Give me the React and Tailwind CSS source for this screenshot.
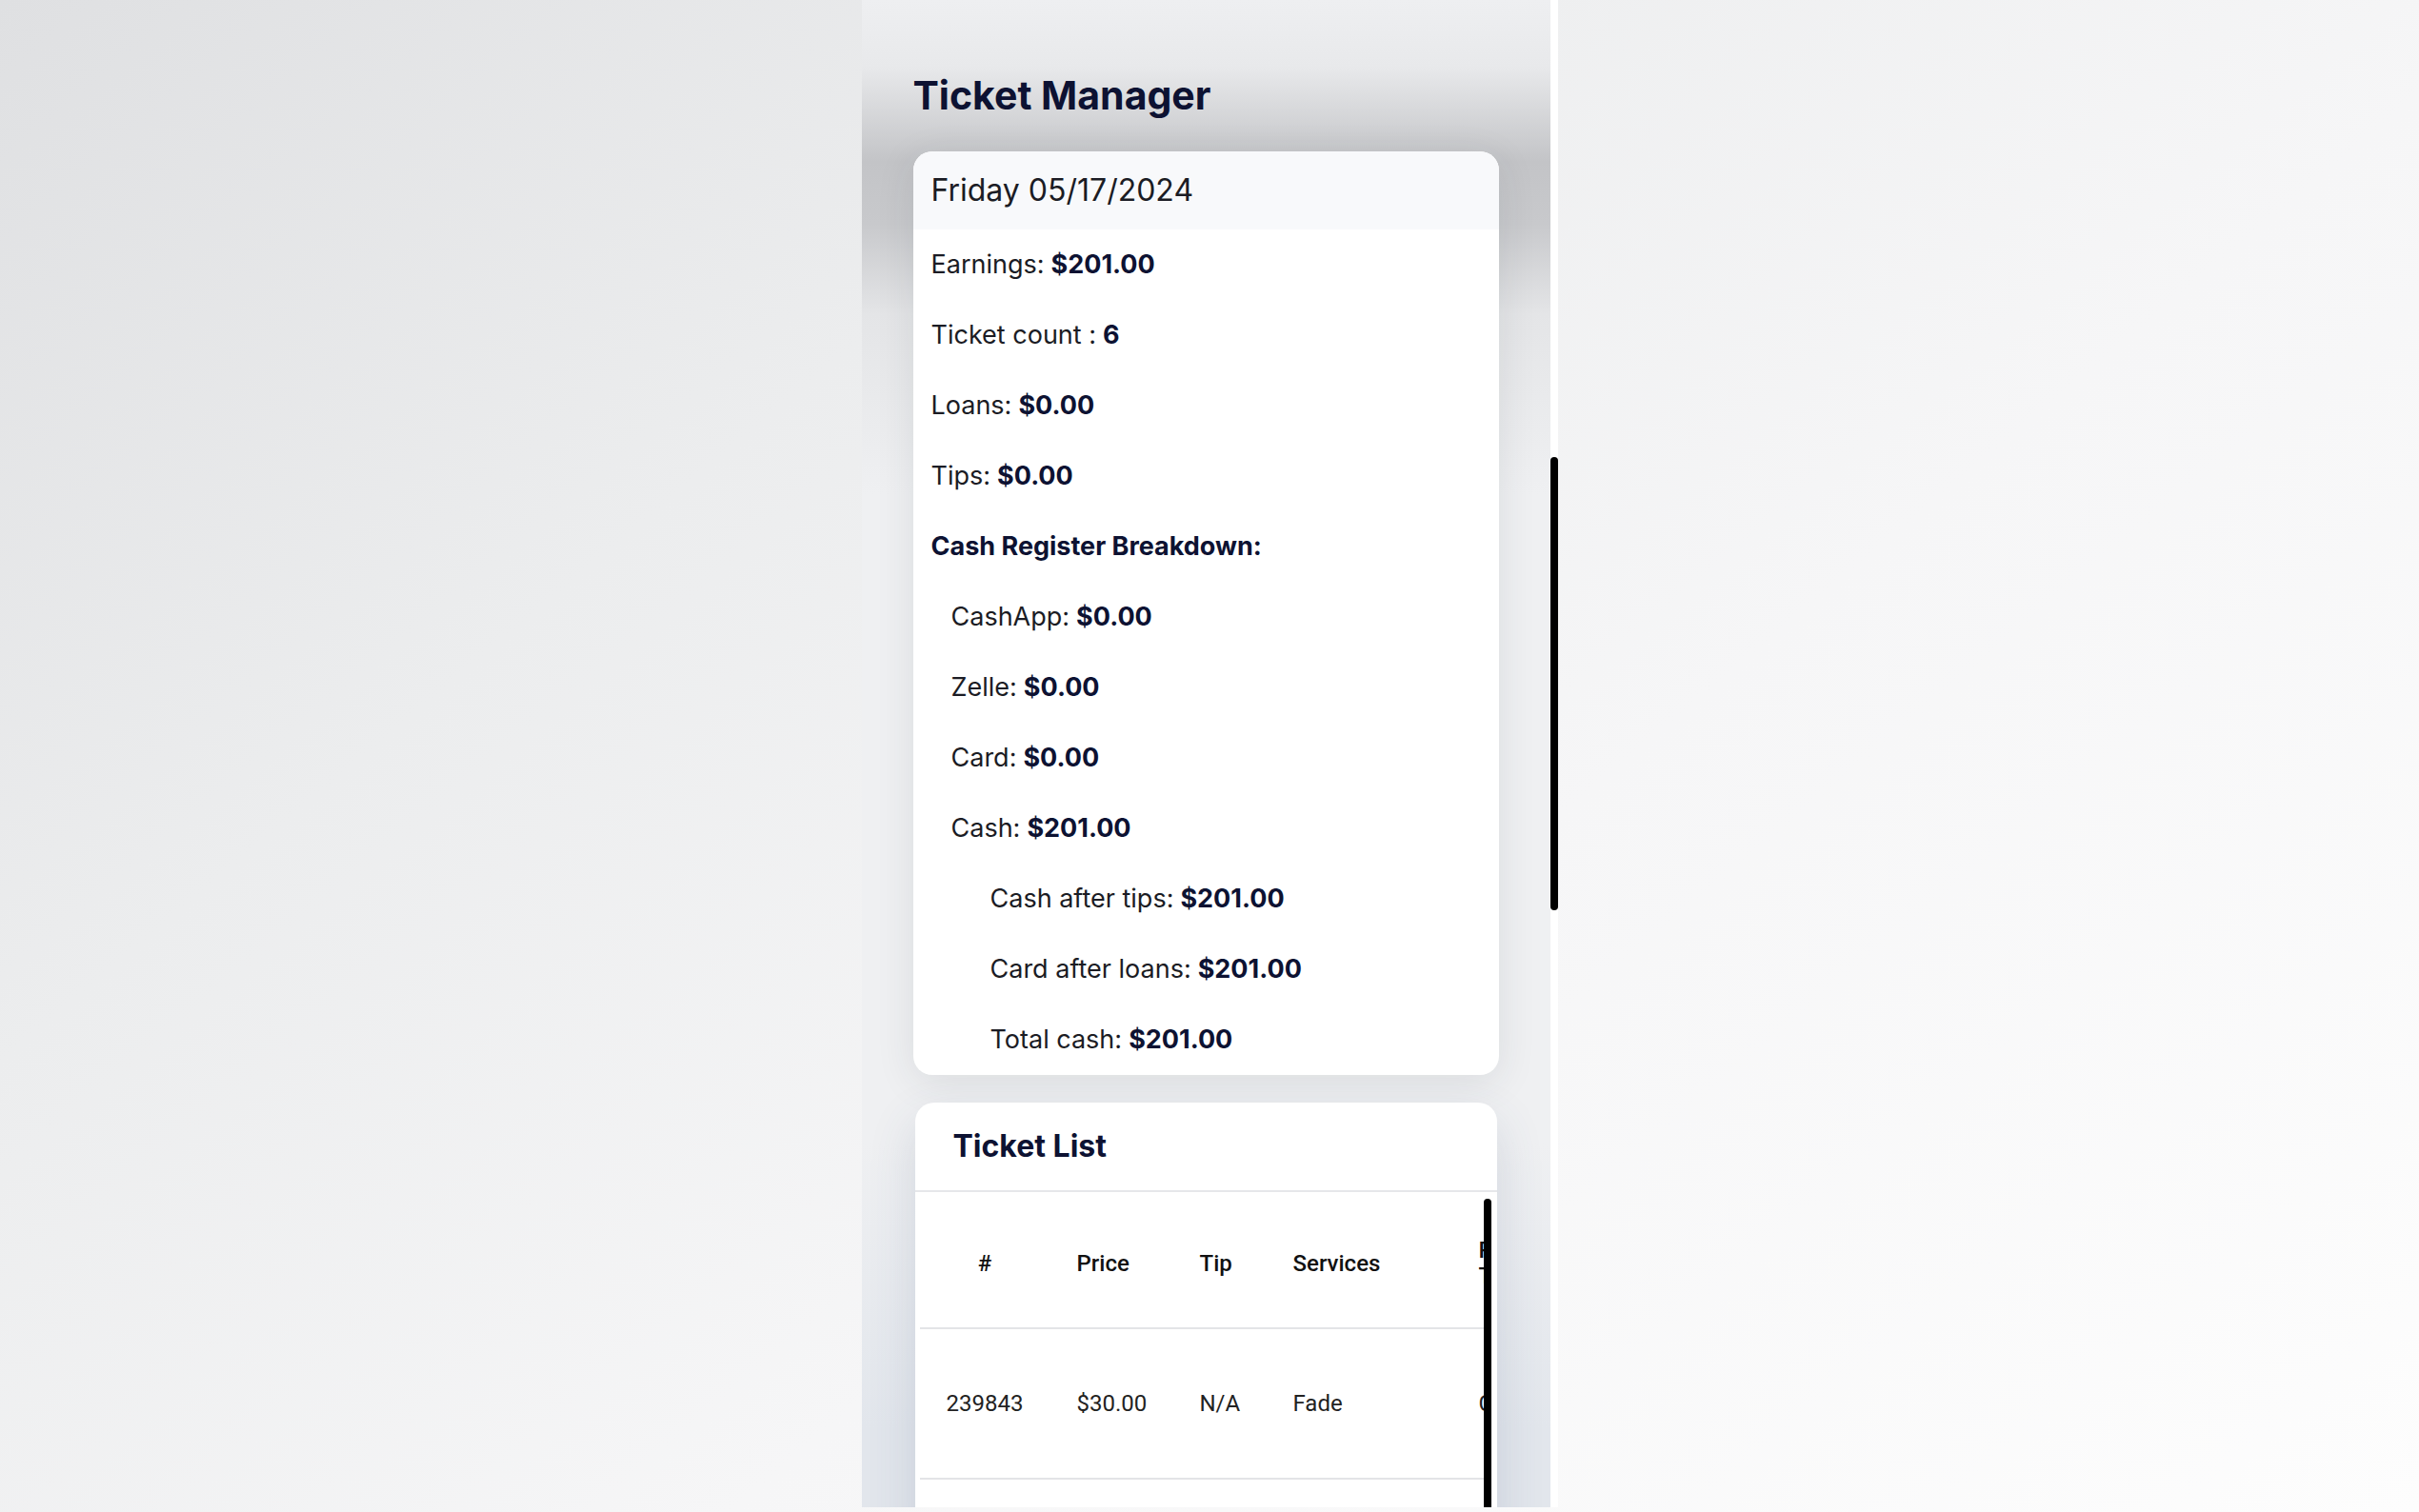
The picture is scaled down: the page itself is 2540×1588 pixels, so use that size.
import React from "react";

const summary = [
  { label: "Earnings:", value: "$201.00", level: 0 },
  { label: "Ticket count :", value: "6", level: 0 },
  { label: "Loans:", value: "$0.00", level: 0 },
  { label: "Tips:", value: "$0.00", level: 0 },
  { label: "", value: "Cash Register Breakdown:", level: 0 },
  { label: "CashApp:", value: "$0.00", level: 1 },
  { label: "Zelle:", value: "$0.00", level: 1 },
  { label: "Card:", value: "$0.00", level: 1 },
  { label: "Cash:", value: "$201.00", level: 1 },
  { label: "Cash after tips:", value: "$201.00", level: 2 },
  { label: "Card after loans:", value: "$201.00", level: 2 },
  { label: "Total cash:", value: "$201.00", level: 2 },
];

const tickets = [
  { id: "239843", price: "$30.00", tip: "N/A", services: "Fade", payment: "Cash" },
];

export default function App() {
  return (
    <div className="flex h-[1588px] w-full justify-center overflow-hidden bg-[linear-gradient(140deg,#dfe0e2_0%,#ecedee_30%,#f6f6f7_60%,#fdfdfd_100%)]">
      <div className="flex h-[1583px]">
        {/* phone screen */}
        <div className="h-full w-[723px] overflow-hidden bg-[linear-gradient(180deg,#eeeff1_0px,#e8e9eb_70px,#c3c4c7_170px,#c8c9cc_235px,#e4e5e7_330px,#eff0f2_520px,#eff0f2_1200px,#e2e6ec_1500px)] px-[54px] font-['Inter',sans-serif]">
          <h1 className="pt-[76px] text-[41px] font-bold leading-[48px] text-[#0d1232]">
            Ticket Manager
          </h1>

          {/* daily summary */}
          <div className="mt-[35px] overflow-hidden rounded-[20px] bg-white shadow-[0_8px_40px_rgba(40,50,60,0.10)]">
            <div className="flex h-[82px] items-center bg-[#f8f9fb] px-[19px] text-[32px] text-[#1b1c24]">
              Friday 05/17/2024
            </div>
            {summary.map((row, index) => (
              <p
                key={index}
                className={
                  "flex h-[74px] items-center text-[27px] text-[#1b1c24] " +
                  (row.level === 0 ? "pl-[19px]" : row.level === 1 ? "pl-[40px]" : "pl-[81px]")
                }
              >
                {row.label && <span className="mr-[7px]">{row.label}</span>}
                <b className="font-bold text-[#0d1232]">{row.value}</b>
              </p>
            ))}
          </div>

          {/* ticket list */}
          <div className="mx-[2px] mt-[29px] rounded-t-[20px] bg-white shadow-[0_20px_50px_rgba(60,80,120,0.16)]">
            <div className="flex h-[94px] items-center border-b-2 border-[#e6e7ea] pl-[40px]">
              <h2 className="text-[32px] font-bold text-[#0d1232]">Ticket List</h2>
            </div>
            <div className="flex pl-[5px] pr-[6px] font-['Roboto',sans-serif]">
              <div className="flex-1 overflow-hidden pt-[7px]">
                <div className="flex h-[137px] w-[759px] items-center border-b-2 border-[#e3e4e7] text-[24px] font-medium text-[#111111]">
                  <div className="w-[137px] shrink-0 text-center">#</div>
                  <div className="w-[129px] shrink-0 pl-[28px]">Price</div>
                  <div className="w-[98px] shrink-0 pl-[28px]">Tip</div>
                  <div className="w-[195px] shrink-0 pl-[28px]">Services</div>
                  <div className="w-[200px] shrink-0 pl-[28px] leading-[27px]">
                    Payment
                    <br />
                    Type
                  </div>
                </div>
                {tickets.map((t) => (
                  <div
                    key={t.id}
                    className="flex h-[158px] w-[759px] items-center border-b-2 border-[#e3e4e7] text-[24px] text-[#222222]"
                  >
                    <div className="w-[137px] shrink-0 text-center">{t.id}</div>
                    <div className="w-[129px] shrink-0 pl-[28px]">{t.price}</div>
                    <div className="w-[98px] shrink-0 pl-[28px]">{t.tip}</div>
                    <div className="w-[195px] shrink-0 pl-[28px]">{t.services}</div>
                    <div className="w-[200px] shrink-0 pl-[28px]">{t.payment}</div>
                  </div>
                ))}
                <div className="h-[60px] w-[759px]" />
              </div>
              <div className="mt-[7px] w-[8px] rounded-t-full bg-black" />
            </div>
          </div>
        </div>

        {/* page scrollbar */}
        <div className="h-full w-[8px] bg-white pt-[480px]">
          <div className="h-[476px] w-full rounded-full bg-black" />
        </div>
      </div>
    </div>
  );
}
